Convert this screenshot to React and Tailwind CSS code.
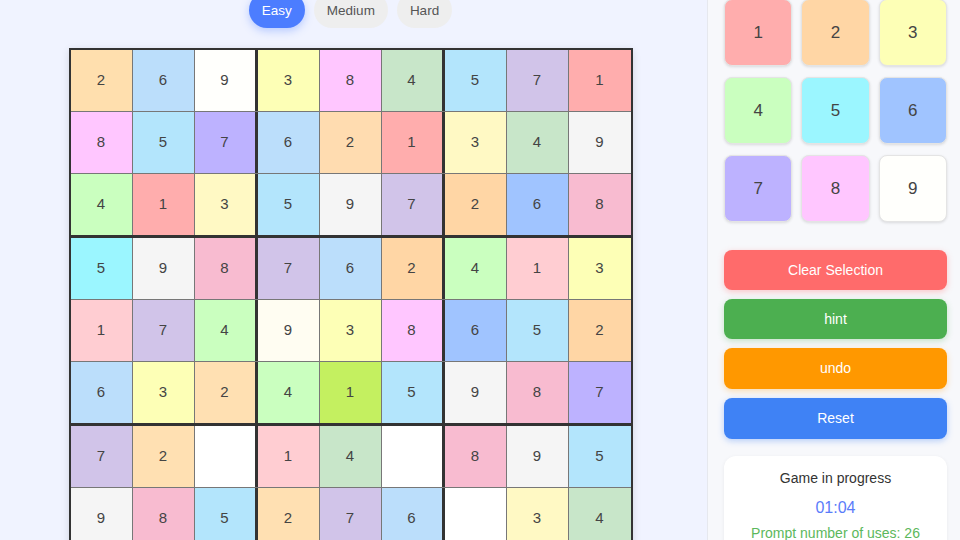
import React, { useState } from "react";

// cell: [value, bg]
const board = [
  [[2, "bg-[#ffdfae]"], [6, "bg-[#bbdefb]"], [9, "bg-[#fffffc]"], [3, "bg-[#fdffb6]"], [8, "bg-[#ffc6ff]"], [4, "bg-[#c8e6c9]"], [5, "bg-[#b3e5fc]"], [7, "bg-[#d1c4e9]"], [1, "bg-[#ffadad]"]],
  [[8, "bg-[#ffc6ff]"], [5, "bg-[#b3e5fc]"], [7, "bg-[#bdb2ff]"], [6, "bg-[#bbdefb]"], [2, "bg-[#ffdcb0]"], [1, "bg-[#ffadad]"], [3, "bg-[#fff9c4]"], [4, "bg-[#c8e6c9]"], [9, "bg-[#f5f5f5]"]],
  [[4, "bg-[#caffbf]"], [1, "bg-[#ffadad]"], [3, "bg-[#fff9c4]"], [5, "bg-[#b3e5fc]"], [9, "bg-[#f5f5f5]"], [7, "bg-[#d1c4e9]"], [2, "bg-[#ffd6a5]"], [6, "bg-[#a0c4ff]"], [8, "bg-[#f8bbd0]"]],
  [[5, "bg-[#9bf6ff]"], [9, "bg-[#f5f5f5]"], [8, "bg-[#f8bbd0]"], [7, "bg-[#d1c4e9]"], [6, "bg-[#bbdefb]"], [2, "bg-[#ffd6a5]"], [4, "bg-[#caffbf]"], [1, "bg-[#ffcdd2]"], [3, "bg-[#fdffb6]"]],
  [[1, "bg-[#ffcdd2]"], [7, "bg-[#d1c4e9]"], [4, "bg-[#caffbf]"], [9, "bg-[#fffdf2]"], [3, "bg-[#fdffb6]"], [8, "bg-[#ffc6ff]"], [6, "bg-[#a0c4ff]"], [5, "bg-[#b3e5fc]"], [2, "bg-[#ffd6a5]"]],
  [[6, "bg-[#bbdefb]"], [3, "bg-[#fdffb6]"], [2, "bg-[#ffe0b2]"], [4, "bg-[#caffbf]"], [1, "bg-[#c4f060]"], [5, "bg-[#b3e5fc]"], [9, "bg-[#f5f5f5]"], [8, "bg-[#f8bbd0]"], [7, "bg-[#bdb2ff]"]],
  [[7, "bg-[#d1c4e9]"], [2, "bg-[#ffe0b2]"], [null, "bg-white"], [1, "bg-[#ffcdd2]"], [4, "bg-[#c8e6c9]"], [null, "bg-white"], [8, "bg-[#f8bbd0]"], [9, "bg-[#f5f5f5]"], [5, "bg-[#b3e5fc]"]],
  [[9, "bg-[#f5f5f5]"], [8, "bg-[#f8bbd0]"], [5, "bg-[#b3e5fc]"], [2, "bg-[#ffe0b2]"], [7, "bg-[#d1c4e9]"], [6, "bg-[#bbdefb]"], [null, "bg-white"], [3, "bg-[#fff9c4]"], [4, "bg-[#c8e6c9]"]],
  [[3, "bg-[#fdffb6]"], [4, "bg-[#caffbf]"], [6, "bg-[#bbdefb]"], [5, "bg-[#b3e5fc]"], [9, "bg-[#f5f5f5]"], [null, "bg-white"], [1, "bg-[#ffcdd2]"], [7, "bg-[#d1c4e9]"], [2, "bg-[#ffd6a5]"]],
];

const pad = [
  [1, "bg-[#ffadad]"], [2, "bg-[#ffd6a5]"], [3, "bg-[#fdffb6]"],
  [4, "bg-[#caffbf]"], [5, "bg-[#9bf6ff]"], [6, "bg-[#a0c4ff]"],
  [7, "bg-[#bdb2ff]"], [8, "bg-[#ffc6ff]"], [9, "bg-[#fffffc]"],
];

export default function App() {
  const [level, setLevel] = useState("Easy");

  return (
    <div className="flex h-[540px] w-[960px] overflow-hidden bg-[#f0f3ff] font-['Liberation_Sans',Arial,sans-serif] text-[#444]">
      {/* Board */}
      <main className="flex w-[707px] flex-col items-center pr-[6px]">
        <div className="-mt-[8px] flex gap-[9px]">
          {["Easy", "Medium", "Hard"].map((l) => (
            <button
              key={l}
              onClick={() => setLevel(l)}
              className={
                level === l
                  ? "h-[36px] rounded-full bg-[#4c7dff] px-[13px] pt-[2px] text-[13.5px] text-white shadow-[0_3px_8px_rgba(76,125,255,0.35)]"
                  : "h-[36px] rounded-full bg-[#eeeeee] px-[13px] pt-[2px] text-[13.5px] text-[#555]"
              }
            >
              {l}
            </button>
          ))}
        </div>

        <div className="mt-[20px] border-2 border-[#333] shadow-[0_2px_8px_rgba(0,0,0,0.12)]">
          {board.map((row, r) => (
            <div
              key={r}
              className={
                r === 2 || r === 5
                  ? "flex border-b-[3px] border-[#333]"
                  : "flex border-b border-[#777]"
              }
            >
              {row.map(([v, bg], c) => (
                <div
                  key={c}
                  className={`flex h-[61px] items-center justify-center text-[15px] text-[#444] ${bg} ${
                    c === 2 || c === 5
                      ? "w-[63px] border-r-[3px] border-[#333]"
                      : c === 8
                      ? "w-[62px]"
                      : "w-[62px] border-r border-[#777]"
                  }`}
                >
                  {v}
                </div>
              ))}
            </div>
          ))}
        </div>
      </main>

      {/* Side panel */}
      <aside className="flex w-[253px] flex-col border-l border-[#e6e8ee] bg-[#f7f8fb] pl-4 pr-[13px]">
        <div className="-mt-[1px] grid grid-cols-3 gap-x-[9px] gap-y-[11px]">
          {pad.map(([n, bg]) => (
            <button
              key={n}
              className={`flex h-[67px] items-center justify-center rounded-lg border border-[#e4e4e4] text-[17px] text-[#444] shadow-[0_1px_3px_rgba(0,0,0,0.12)] ${bg}`}
            >
              {n}
            </button>
          ))}
        </div>

        <div className="mt-[28px] flex flex-col gap-[9px]">
          <button className="h-[40px] rounded-lg bg-[#ff6b6b] text-[14px] text-white shadow-[0_2px_6px_rgba(255,107,107,0.35)]">
            Clear Selection
          </button>
          <button className="h-[40px] rounded-lg bg-[#4caf50] text-[14px] text-white shadow-[0_2px_6px_rgba(76,175,80,0.3)]">
            hint
          </button>
          <button className="h-[41px] rounded-lg bg-[#ff9800] text-[14px] text-white shadow-[0_2px_6px_rgba(255,152,0,0.3)]">
            undo
          </button>
          <button className="h-[41px] rounded-lg bg-[#3f82f5] text-[14px] text-white shadow-[0_2px_6px_rgba(63,130,245,0.35)]">
            Reset
          </button>
        </div>

        <div className="mt-[17px] flex flex-col items-center rounded-xl bg-white pt-[12px] pb-4 shadow-[0_1px_4px_rgba(0,0,0,0.06)]">
          <div className="text-[14px] text-[#333]">Game in progress</div>
          <div className="mt-[7px] text-[16px] text-[#5b7cfa]">01:04</div>
          <div className="mt-[3px] text-[14px] text-[#5cb85c]">Prompt number of uses: 26</div>
        </div>
      </aside>
    </div>
  );
}
